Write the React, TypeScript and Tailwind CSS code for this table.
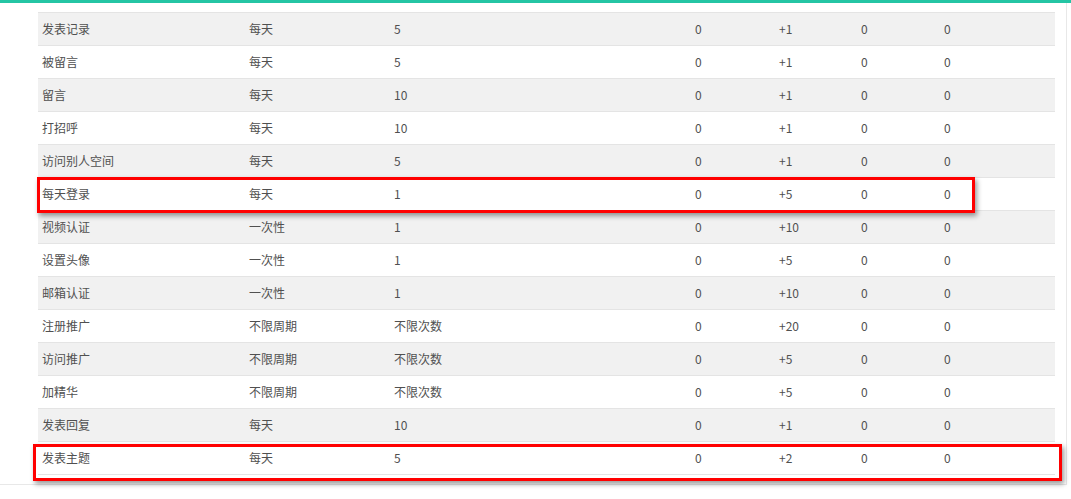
import React from 'react';

type Row = { name: string; cycle: string; times: string; a: string; b: string; c: string; d: string };

const rows: Row[] = [
  { name: '发表记录', cycle: '每天', times: '5', a: '0', b: '+1', c: '0', d: '0' },
  { name: '被留言', cycle: '每天', times: '5', a: '0', b: '+1', c: '0', d: '0' },
  { name: '留言', cycle: '每天', times: '10', a: '0', b: '+1', c: '0', d: '0' },
  { name: '打招呼', cycle: '每天', times: '10', a: '0', b: '+1', c: '0', d: '0' },
  { name: '访问别人空间', cycle: '每天', times: '5', a: '0', b: '+1', c: '0', d: '0' },
  { name: '每天登录', cycle: '每天', times: '1', a: '0', b: '+5', c: '0', d: '0' },
  { name: '视频认证', cycle: '一次性', times: '1', a: '0', b: '+10', c: '0', d: '0' },
  { name: '设置头像', cycle: '一次性', times: '1', a: '0', b: '+5', c: '0', d: '0' },
  { name: '邮箱认证', cycle: '一次性', times: '1', a: '0', b: '+10', c: '0', d: '0' },
  { name: '注册推广', cycle: '不限周期', times: '不限次数', a: '0', b: '+20', c: '0', d: '0' },
  { name: '访问推广', cycle: '不限周期', times: '不限次数', a: '0', b: '+5', c: '0', d: '0' },
  { name: '加精华', cycle: '不限周期', times: '不限次数', a: '0', b: '+5', c: '0', d: '0' },
  { name: '发表回复', cycle: '每天', times: '10', a: '0', b: '+1', c: '0', d: '0' },
  { name: '发表主题', cycle: '每天', times: '5', a: '0', b: '+2', c: '0', d: '0' },
];

export default function App() {
  return (
    <div
      className="relative w-[1071px] h-[499px] bg-white overflow-hidden text-[12px] text-[#505050]"
      style={{ fontFamily: '"Noto Sans CJK SC", "Noto Sans", sans-serif' }}
    >
      <div className="h-[3px] bg-[#24c5a4]" />
      <div className="w-[1067px] border-r border-b border-[#e8e8e8] pl-[38px] pr-[11px] pt-[9px] pb-[9px]">
        <div className="border-b border-[#e4e4e4]">
          {rows.map((r, i) => (
            <div
              key={r.name}
              className={`flex h-[33px] items-center border-t border-[#e4e4e4] ${i % 2 === 0 ? 'bg-[#f1f1f1]' : 'bg-white'}`}
            >
              <div className="w-[207px] pl-[4px]">{r.name}</div>
              <div className="w-[145px] pl-[4px]">{r.cycle}</div>
              <div className="w-[301px] pl-[4px]">{r.times}</div>
              <div className="w-[84px] pl-[4px]">{r.a}</div>
              <div className="w-[82px] pl-[4px]">{r.b}</div>
              <div className="w-[83px] pl-[4px]">{r.c}</div>
              <div className="flex-1 pl-[4px]">{r.d}</div>
            </div>
          ))}
        </div>
      </div>

      <div className="absolute left-[37px] top-[177px] w-[938px] h-[36px] border-[3px] border-[#ff0000] shadow-[2px_3px_5px_rgba(0,0,0,0.4)]" />
      <div className="absolute left-[33px] top-[444px] w-[1029px] h-[37px] border-[3px] border-[#ff0000] shadow-[2px_3px_5px_rgba(0,0,0,0.4)]" />
    </div>
  );
}
